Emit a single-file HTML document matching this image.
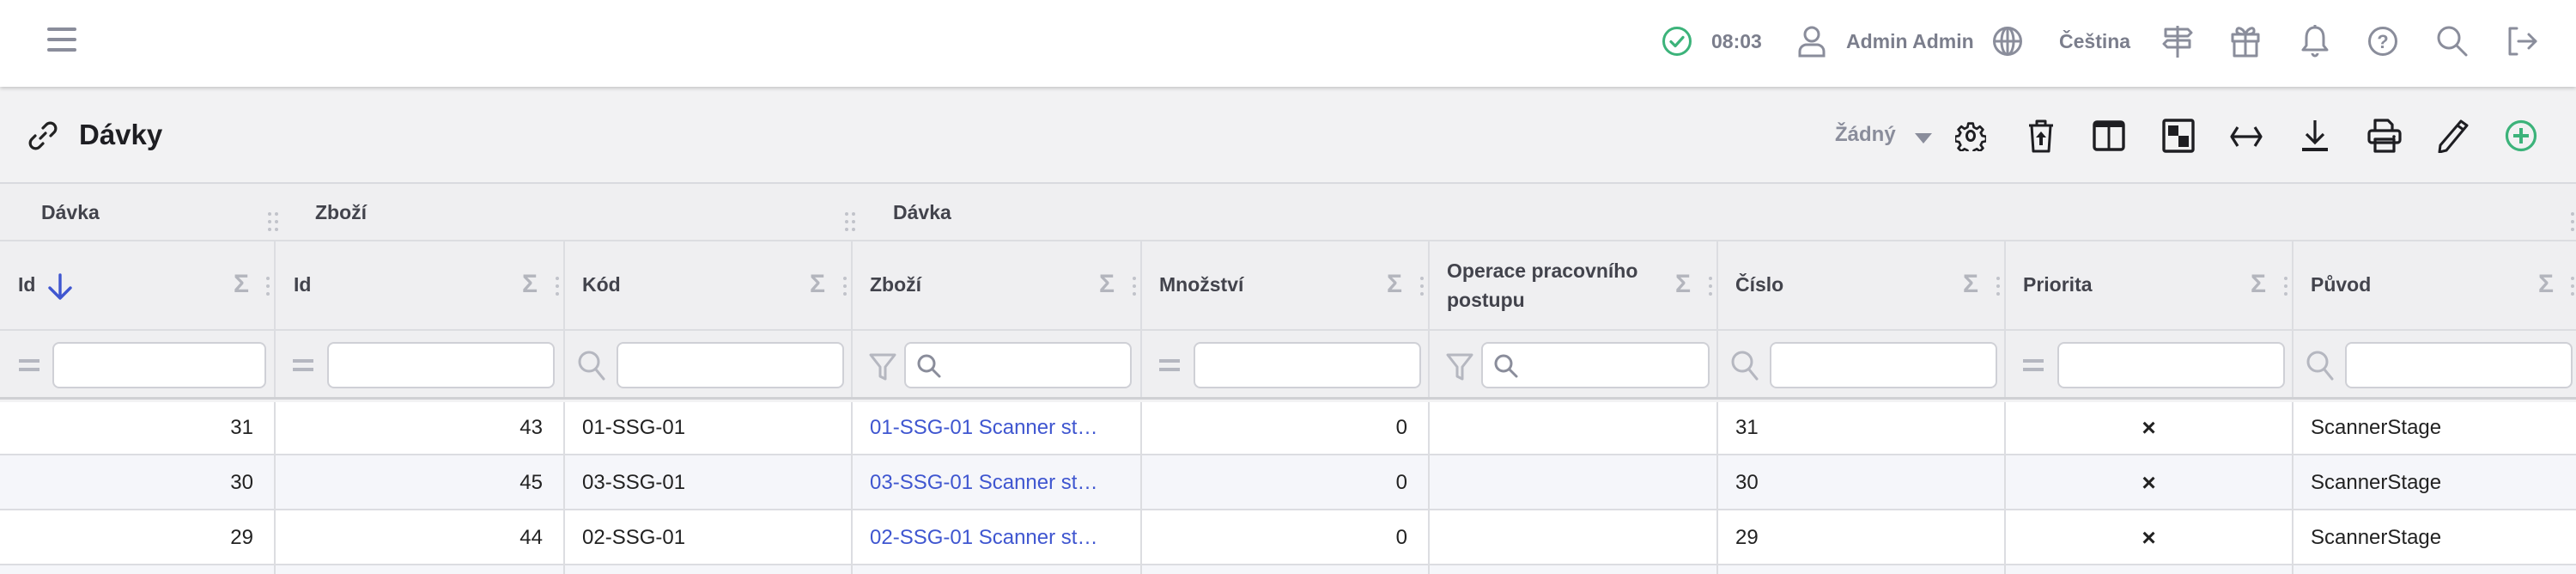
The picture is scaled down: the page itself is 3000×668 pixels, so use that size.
<!DOCTYPE html>
<html><head><meta charset="utf-8">
<style>
*{box-sizing:border-box;margin:0;padding:0}
body{width:3000px;height:662px;overflow:hidden;background:#f2f2f3;font-family:"Liberation Sans",sans-serif;position:relative}
.abs{position:absolute}
#top{left:0;top:0;width:3000px;height:101px;background:#fff;box-shadow:0 2px 4px rgba(0,0,0,.18);z-index:3}
.tt{position:absolute;top:33px;font-size:23px;font-weight:bold;color:#7b7e8c;line-height:30px}
.ic{position:absolute}
.band{position:absolute;left:0;width:3000px}
.cell{position:absolute;top:0;height:100%;border-left:2px solid #dcdde1}
.hd{font-size:23px;font-weight:bold;color:#42434c}
.sig{position:absolute;font-size:30px;color:#b3b5bd;font-weight:bold}
.dots{position:absolute;width:4px}
.dots i{display:block;width:4px;height:4px;border-radius:2px;background:#c1c3ca;margin-bottom:5px}
.inp{position:absolute;top:33px;height:54px;background:#fff;border:2px solid #cfd0d6;border-radius:8px}
.eq{position:absolute;top:33px;width:24px;height:14px;border-top:4px solid #b5b7c0;border-bottom:4px solid #b5b7c0}
.row .cell{font-size:24px;color:#222;line-height:63px}
.r{text-align:right;padding-right:24px}
.l{padding-left:20px}
.x{text-align:center;font-weight:bold;font-size:28px !important}
a{color:#3f56d0;text-decoration:none}
</style></head><body>
<div id="top" class="abs">
 <svg class="ic" style="left:55px;top:32px" width="34" height="28"><g stroke="#8a8d9b" stroke-width="4" stroke-linecap="round"><line x1="2" y1="2" x2="32" y2="2"/><line x1="2" y1="14" x2="32" y2="14"/><line x1="2" y1="26" x2="32" y2="26"/></g></svg>
 <svg class="ic" style="left:1935px;top:30px" width="36" height="36" viewBox="0 0 36 36"><circle cx="18" cy="18" r="15.5" fill="none" stroke="#3cb37a" stroke-width="3"/><path d="M11 18.5l5 5 9-10" fill="none" stroke="#3cb37a" stroke-width="3.2" stroke-linecap="round" stroke-linejoin="round"/></svg>
 <div class="tt" style="left:1993px">08:03</div>
 <svg class="ic" style="left:2092px;top:29px" width="36" height="38" viewBox="0 0 36 38"><g fill="none" stroke="#8a8d9b" stroke-width="3"><circle cx="18" cy="11" r="8"/><path d="M4 36v-5a8 8 0 0 1 8-8h12a8 8 0 0 1 8 8v5z"/></g></svg>
 <div class="tt" style="left:2150px">Admin Admin</div>
 <svg class="ic" style="left:2320px;top:30px" width="36" height="36" viewBox="0 0 36 36"><g fill="none" stroke="#8a8d9b" stroke-width="3"><circle cx="18" cy="18" r="15.5"/><ellipse cx="18" cy="18" rx="7" ry="15.5"/><line x1="2.5" y1="18" x2="33.5" y2="18"/><line x1="18" y1="2.5" x2="18" y2="33.5"/></g></svg>
 <div class="tt" style="left:2398px">Čeština</div>
 <svg class="ic" style="left:2518px;top:28px" width="36" height="40" viewBox="0 0 36 40"><g fill="none" stroke="#8a8d9b" stroke-width="3" stroke-linejoin="round"><line x1="18" y1="2" x2="18" y2="39"/><path d="M4 6h26l4 4-4 4H4z"/><path d="M32 19H6l-4 4 4 4h26z"/></g></svg>
 <svg class="ic" style="left:2597px;top:29px" width="36" height="38" viewBox="0 0 36 38"><g fill="none" stroke="#8a8d9b" stroke-width="3" stroke-linejoin="round"><rect x="3" y="11" width="30" height="8"/><rect x="5" y="19" width="26" height="17"/><line x1="18" y1="11" x2="18" y2="36"/><path d="M18 11c-2-6-9-10-10-5s6 5 10 5c4 0 11 0 10-5s-8-1-10 5"/></g></svg>
 <svg class="ic" style="left:2678px;top:28px" width="36" height="40" viewBox="0 0 36 40"><g fill="none" stroke="#8a8d9b" stroke-width="3" stroke-linejoin="round"><path d="M18 4c-7 0-10 5-10 12v9l-4 5h28l-4-5v-9c0-7-3-12-10-12z"/><path d="M15 34a3 3 0 0 0 6 0"/><line x1="18" y1="1" x2="18" y2="4"/></g></svg>
 <svg class="ic" style="left:2757px;top:30px" width="36" height="36" viewBox="0 0 36 36"><circle cx="18" cy="18" r="15.5" fill="none" stroke="#8a8d9b" stroke-width="3"/><text x="18" y="26" text-anchor="middle" font-family="Liberation Sans" font-weight="bold" font-size="22" fill="#8a8d9b">?</text></svg>
 <svg class="ic" style="left:2837px;top:29px" width="38" height="38" viewBox="0 0 38 38"><g fill="none" stroke="#8a8d9b" stroke-width="3" stroke-linecap="round"><circle cx="15" cy="15" r="12"/><line x1="24" y1="24" x2="35" y2="35"/></g></svg>
 <svg class="ic" style="left:2919px;top:30px" width="38" height="36" viewBox="0 0 38 36"><g fill="none" stroke="#8a8d9b" stroke-width="3" stroke-linecap="round" stroke-linejoin="round"><path d="M12 3H4v30h8"/><line x1="14" y1="18" x2="34" y2="18"/><path d="M26 10l8 8-8 8"/></g></svg>
</div>

<svg class="abs" style="left:32px;top:140px" width="36" height="36" viewBox="0 0 36 36"><g fill="none" stroke="#222" stroke-width="3.2" stroke-linecap="round"><path d="M15 21l6-6"/><path d="M18 9l4-4a6 6 0 0 1 9 9l-4 4"/><path d="M18 27l-4 4a6 6 0 0 1-9-9l4-4"/></g></svg>
<div class="abs" style="left:92px;top:138px;font-size:33px;font-weight:bold;color:#1e1e22">Dávky</div>
<div class="abs" style="left:2137px;top:143px;font-size:24px;font-weight:bold;color:#8a8d9b">Žádný</div>
<svg class="abs" style="left:2230px;top:155px" width="20" height="14"><path d="M0 0h20L10 12z" fill="#8a8d9b"/></svg>
<svg class="abs" style="left:2277px;top:140px" width="36" height="36" viewBox="0 0 36 36"><g fill="none" stroke="#1e1e22" stroke-width="3" stroke-linejoin="round"><path d="M15 2h6l1 5 4 2 4-3 4 4-3 4 2 4 5 1v6l-5 1-2 4 3 4-4 4-4-3-4 2-1 5h-6l-1-5-4-2-4 3-4-4 3-4-2-4-5-1v-6l5-1 2-4-3-4 4-4 4 3 4-2z" transform="scale(.9) translate(2 2)"/><ellipse cx="18" cy="18" rx="4.5" ry="5.5"/></g></svg>
<svg class="abs" style="left:2360px;top:138px" width="34" height="40" viewBox="0 0 34 40"><g fill="none" stroke="#1e1e22" stroke-width="3" stroke-linejoin="round"><path d="M3 8h28"/><path d="M12 8V3h10v5"/><path d="M6 8l2 30h18l2-30"/></g><path d="M17 15l-6 7h4v9h4v-9h4z" fill="#1e1e22"/></svg>
<svg class="abs" style="left:2437px;top:140px" width="38" height="36" viewBox="0 0 38 36"><rect x="2" y="2" width="34" height="32" rx="3" fill="none" stroke="#1e1e22" stroke-width="3.4"/><rect x="2" y="2" width="34" height="6" fill="#1e1e22"/><line x1="19" y1="4" x2="19" y2="34" stroke="#1e1e22" stroke-width="3"/></svg>
<svg class="abs" style="left:2518px;top:138px" width="38" height="40" viewBox="0 0 38 40"><rect x="2" y="2" width="34" height="36" rx="2" fill="none" stroke="#1e1e22" stroke-width="3.4"/><rect x="7" y="8" width="12" height="12" fill="#1e1e22"/><rect x="19" y="20" width="12" height="13" fill="#1e1e22"/></svg>
<svg class="abs" style="left:2596px;top:145px" width="40" height="28" viewBox="0 0 40 28"><g fill="none" stroke="#1e1e22" stroke-width="3.2" stroke-linejoin="round"><line x1="3" y1="14" x2="37" y2="14"/><path d="M10 3L3 14l7 11"/><path d="M30 3l7 11-7 11"/></g></svg>
<svg class="abs" style="left:2680px;top:138px" width="32" height="40" viewBox="0 0 32 40"><g fill="none" stroke="#1e1e22" stroke-width="3.2"><line x1="16" y1="2" x2="16" y2="28"/><path d="M6 18l10 10 10-10"/></g><rect x="1" y="34" width="30" height="4" fill="#1e1e22"/></svg>
<svg class="abs" style="left:2757px;top:138px" width="40" height="40" viewBox="0 0 40 40"><g fill="none" stroke="#1e1e22" stroke-width="3.2" stroke-linejoin="round"><path d="M9 14V2h15l5 5v7"/><rect x="2" y="14" width="36" height="14" rx="3"/><rect x="9" y="24" width="22" height="14"/></g><circle cx="31" cy="21" r="1.8" fill="#1e1e22"/></svg>
<svg class="abs" style="left:2838px;top:138px" width="38" height="40" viewBox="0 0 38 40"><g fill="none" stroke="#1e1e22" stroke-width="3" stroke-linejoin="round"><path d="M28 3l7 5L11 37l-8 2 1-8z"/><line x1="24" y1="8" x2="31" y2="13"/></g></svg>
<svg class="abs" style="left:2917px;top:139px" width="38" height="38" viewBox="0 0 38 38"><circle cx="19" cy="19" r="16.5" fill="none" stroke="#3cb37a" stroke-width="3.2"/><g stroke="#3cb37a" stroke-width="4"><line x1="19" y1="10" x2="19" y2="28"/><line x1="10" y1="19" x2="28" y2="19"/></g></svg>

<div class="band" style="top:212px;height:69px;background:#efeff1;border-top:2px solid #d9dadf;border-bottom:2px solid #dcdde1">
 <div class="hd abs" style="left:48px;top:20px">Dávka</div>
 <div class="dots" style="left:312px;top:33px"><i></i><i></i><i></i></div><div class="dots" style="left:320px;top:33px"><i></i><i></i><i></i></div>
 <div class="hd abs" style="left:367px;top:20px">Zboží</div>
 <div class="dots" style="left:984px;top:33px"><i></i><i></i><i></i></div><div class="dots" style="left:992px;top:33px"><i></i><i></i><i></i></div>
 <div class="hd abs" style="left:1040px;top:20px">Dávka</div>
 <div class="dots" style="left:2994px;top:33px"><i></i><i></i><i></i></div>
</div>

<div class="band" style="top:281px;height:104px;background:#efeff1;border-bottom:2px solid #dcdde1">
 <div class="cell" style="left:0;width:319px;border-left:none"><div class="hd abs" style="left:21px;top:37px">Id</div>
  <svg class="abs" style="left:55px;top:37px" width="30" height="31" viewBox="0 0 30 31"><g fill="none" stroke="#3f56d0" stroke-width="3.4" stroke-linecap="round" stroke-linejoin="round"><line x1="15" y1="2" x2="15" y2="28"/><path d="M3 17l12 12 12-12"/></g></svg></div>
 <div class="cell" style="left:319px;width:337px"><div class="hd abs" style="left:21px;top:37px">Id</div></div>
 <div class="cell" style="left:656px;width:335px"><div class="hd abs" style="left:20px;top:37px">Kód</div></div>
 <div class="cell" style="left:991px;width:337px"><div class="hd abs" style="left:20px;top:37px">Zboží</div></div>
 <div class="cell" style="left:1328px;width:335px"><div class="hd abs" style="left:20px;top:37px">Množství</div></div>
 <div class="cell" style="left:1663px;width:336px"><div class="hd abs" style="left:20px;top:17px;line-height:34px">Operace pracovního<br>postupu</div></div>
 <div class="cell" style="left:1999px;width:335px"><div class="hd abs" style="left:20px;top:37px">Číslo</div></div>
 <div class="cell" style="left:2334px;width:335px"><div class="hd abs" style="left:20px;top:37px">Priorita</div></div>
 <div class="cell" style="left:2669px;width:331px"><div class="hd abs" style="left:20px;top:37px">Původ</div></div>
</div>

<div class="band" style="top:385px;height:80px;background:#efeff1;border-bottom:3px solid #cfd0d4">
 <div class="cell" style="left:0;width:319px;border-left:none"><div class="eq" style="left:22px"></div><div class="inp" style="left:61px;width:249px;top:13px"></div></div>
 <div class="cell" style="left:319px;width:337px"><div class="eq" style="left:20px"></div><div class="inp" style="left:60px;width:265px;top:13px"></div></div>
 <div class="cell" style="left:656px;width:335px"><svg class="abs" style="left:14px;top:22px" width="34" height="36" viewBox="0 0 34 36"><g fill="none" stroke="#b5b7c0" stroke-width="3" stroke-linecap="round"><circle cx="14" cy="14" r="11"/><line x1="22" y1="23" x2="31" y2="34"/></g></svg><div class="inp" style="left:60px;width:265px;top:13px"></div></div>
 <div class="cell" style="left:991px;width:337px"><svg class="abs" style="left:18px;top:25px" width="34" height="34" viewBox="0 0 34 34"><path d="M3 3h28L20 17v14l-6-3V17z" fill="none" stroke="#b5b7c0" stroke-width="3" stroke-linejoin="round"/></svg><div class="inp" style="left:60px;width:265px;top:13px"><svg class="abs" style="left:12px;top:11px" width="30" height="30" viewBox="0 0 30 30"><g fill="none" stroke="#8a8d9b" stroke-width="3" stroke-linecap="round"><circle cx="12" cy="12" r="9"/><line x1="19" y1="19" x2="27" y2="27"/></g></svg></div></div>
 <div class="cell" style="left:1328px;width:335px"><div class="eq" style="left:20px"></div><div class="inp" style="left:60px;width:265px;top:13px"></div></div>
 <div class="cell" style="left:1663px;width:336px"><svg class="abs" style="left:18px;top:25px" width="34" height="34" viewBox="0 0 34 34"><path d="M3 3h28L20 17v14l-6-3V17z" fill="none" stroke="#b5b7c0" stroke-width="3" stroke-linejoin="round"/></svg><div class="inp" style="left:60px;width:266px;top:13px"><svg class="abs" style="left:12px;top:11px" width="30" height="30" viewBox="0 0 30 30"><g fill="none" stroke="#8a8d9b" stroke-width="3" stroke-linecap="round"><circle cx="12" cy="12" r="9"/><line x1="19" y1="19" x2="27" y2="27"/></g></svg></div></div>
 <div class="cell" style="left:1999px;width:335px"><svg class="abs" style="left:14px;top:22px" width="34" height="36" viewBox="0 0 34 36"><g fill="none" stroke="#b5b7c0" stroke-width="3" stroke-linecap="round"><circle cx="14" cy="14" r="11"/><line x1="22" y1="23" x2="31" y2="34"/></g></svg><div class="inp" style="left:60px;width:265px;top:13px"></div></div>
 <div class="cell" style="left:2334px;width:335px"><div class="eq" style="left:20px"></div><div class="inp" style="left:60px;width:265px;top:13px"></div></div>
 <div class="cell" style="left:2669px;width:331px"><svg class="abs" style="left:14px;top:22px" width="34" height="36" viewBox="0 0 34 36"><g fill="none" stroke="#b5b7c0" stroke-width="3" stroke-linecap="round"><circle cx="14" cy="14" r="11"/><line x1="22" y1="23" x2="31" y2="34"/></g></svg><div class="inp" style="left:60px;width:265px;top:13px"></div></div>
</div>

<div class="band row" style="top:468px;height:62px;background:#fff;border-bottom:2px solid #dcdde1">
 <div class="cell r" style="left:0;width:319px;border-left:none;line-height:60px">31</div>
 <div class="cell r" style="left:319px;width:337px;line-height:60px">43</div>
 <div class="cell l" style="left:656px;width:335px;line-height:60px">01-SSG-01</div>
 <div class="cell l" style="left:991px;width:337px;line-height:60px"><a>01-SSG-01 Scanner st…</a></div>
 <div class="cell r" style="left:1328px;width:335px;line-height:60px">0</div>
 <div class="cell" style="left:1663px;width:336px"></div>
 <div class="cell l" style="left:1999px;width:335px;line-height:60px">31</div>
 <div class="cell x" style="left:2334px;width:335px;line-height:60px">×</div>
 <div class="cell l" style="left:2669px;width:331px;line-height:60px">ScannerStage</div>
</div>
<div class="band row" style="top:530px;height:64px;background:#f5f6fa;border-bottom:2px solid #dcdde1">
 <div class="cell r" style="left:0;width:319px;border-left:none">30</div>
 <div class="cell r" style="left:319px;width:337px">45</div>
 <div class="cell l" style="left:656px;width:335px">03-SSG-01</div>
 <div class="cell l" style="left:991px;width:337px"><a>03-SSG-01 Scanner st…</a></div>
 <div class="cell r" style="left:1328px;width:335px">0</div>
 <div class="cell" style="left:1663px;width:336px"></div>
 <div class="cell l" style="left:1999px;width:335px">30</div>
 <div class="cell x" style="left:2334px;width:335px">×</div>
 <div class="cell l" style="left:2669px;width:331px">ScannerStage</div>
</div>
<div class="band row" style="top:594px;height:64px;background:#fff;border-bottom:2px solid #dcdde1">
 <div class="cell r" style="left:0;width:319px;border-left:none">29</div>
 <div class="cell r" style="left:319px;width:337px">44</div>
 <div class="cell l" style="left:656px;width:335px">02-SSG-01</div>
 <div class="cell l" style="left:991px;width:337px"><a>02-SSG-01 Scanner st…</a></div>
 <div class="cell r" style="left:1328px;width:335px">0</div>
 <div class="cell" style="left:1663px;width:336px"></div>
 <div class="cell l" style="left:1999px;width:335px">29</div>
 <div class="cell x" style="left:2334px;width:335px">×</div>
 <div class="cell l" style="left:2669px;width:331px">ScannerStage</div>
</div>
<div class="band row" style="top:658px;height:10px;background:#f5f6fa">
 <div class="cell" style="left:319px"></div><div class="cell" style="left:656px"></div><div class="cell" style="left:991px"></div><div class="cell" style="left:1328px"></div><div class="cell" style="left:1663px"></div><div class="cell" style="left:1999px"></div><div class="cell" style="left:2334px"></div><div class="cell" style="left:2669px"></div>
</div>

<div class="abs" style="top:281px;left:0;width:3000px;height:104px">
 <span class="sig" style="left:272px;top:33px">Σ</span><div class="dots" style="left:310px;top:41px"><i></i><i></i><i></i></div>
 <span class="sig" style="left:608px;top:33px">Σ</span><div class="dots" style="left:647px;top:41px"><i></i><i></i><i></i></div>
 <span class="sig" style="left:943px;top:33px">Σ</span><div class="dots" style="left:982px;top:41px"><i></i><i></i><i></i></div>
 <span class="sig" style="left:1280px;top:33px">Σ</span><div class="dots" style="left:1319px;top:41px"><i></i><i></i><i></i></div>
 <span class="sig" style="left:1615px;top:33px">Σ</span><div class="dots" style="left:1654px;top:41px"><i></i><i></i><i></i></div>
 <span class="sig" style="left:1951px;top:33px">Σ</span><div class="dots" style="left:1990px;top:41px"><i></i><i></i><i></i></div>
 <span class="sig" style="left:2286px;top:33px">Σ</span><div class="dots" style="left:2325px;top:41px"><i></i><i></i><i></i></div>
 <span class="sig" style="left:2621px;top:33px">Σ</span><div class="dots" style="left:2660px;top:41px"><i></i><i></i><i></i></div>
 <span class="sig" style="left:2956px;top:33px">Σ</span><div class="dots" style="left:2994px;top:41px"><i></i><i></i><i></i></div>
</div>
</body></html>
